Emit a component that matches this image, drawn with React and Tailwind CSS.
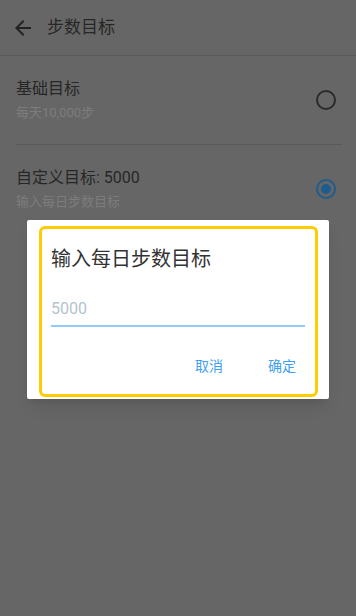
import React from 'react';

const font = { fontFamily: '"Roboto", "Noto Sans CJK SC", sans-serif' };

const Radio = ({ checked }) =>
  checked ? (
    <div className="w-5 h-5 rounded-full border-2 border-[#1d5c8f] flex items-center justify-center">
      <div className="w-[10px] h-[10px] rounded-full bg-[#1d5c8f]" />
    </div>
  ) : (
    <div className="w-5 h-5 rounded-full border-2 border-[#2b2b2b]" />
  );

const GoalRow = ({ title, subtitle, checked }) => (
  <div className="flex items-center pl-4 pr-5 pt-[21px] pb-[22px]">
    <div className="flex-1 min-w-0">
      <p className="text-[16px] leading-6 text-[#262626]">{title}</p>
      <p className="mt-[3px] text-[13px] leading-[18px] text-[#7d7d7d]">{subtitle}</p>
    </div>
    <Radio checked={checked} />
  </div>
);

export default function App() {
  return (
    <div className="relative w-[356px] h-[616px] bg-[#666666] overflow-hidden" style={font}>
      {/* Toolbar */}
      <div className="h-[56px] flex items-center border-b border-[#595959]">
        <div className="ml-[11px] w-6 h-6 text-[#222]">
          <svg viewBox="0 0 24 24" width="24" height="24" fill="currentColor">
            <path d="M20 11H7.83l5.59-5.59L12 4l-8 8 8 8 1.41-1.41L7.83 13H20v-2z" />
          </svg>
        </div>
        <h1 className="ml-3 text-[17px] text-[#262626]">步数目标</h1>
      </div>

      <GoalRow title="基础目标" subtitle="每天10,000步" />
      <div className="ml-4 mr-[14px] h-px bg-[#595959]" />
      <GoalRow title="自定义目标: 5000" subtitle="输入每日步数目标" checked />

      {/* Dialog */}
      <div className="absolute inset-0 flex items-center justify-center">
        <div className="relative w-[302px] bg-white rounded-[2px] shadow-lg mt-[2px]">
          <div className="absolute left-[12px] top-[6px] right-[11px] bottom-[2px] border-[3px] border-[#ffcc00] rounded-md pointer-events-none" />
          <h2 className="px-6 pt-6 text-[20px] leading-[30px] text-[#333]">输入每日步数目标</h2>
          <div className="mx-6 mt-[23px] pb-1 border-b-2 border-[#90caf9]">
            <p className="text-[16px] leading-6 text-[#b4c3cc]">5000</p>
          </div>
          <div className="flex justify-end gap-[9px] pr-[15px] mt-[22px] pb-[14px]">
            <button className="w-16 h-9 text-[14px] text-[#3f9ff0]">取消</button>
            <button className="w-16 h-9 text-[14px] text-[#3f9ff0]">确定</button>
          </div>
        </div>
      </div>
    </div>
  );
}
